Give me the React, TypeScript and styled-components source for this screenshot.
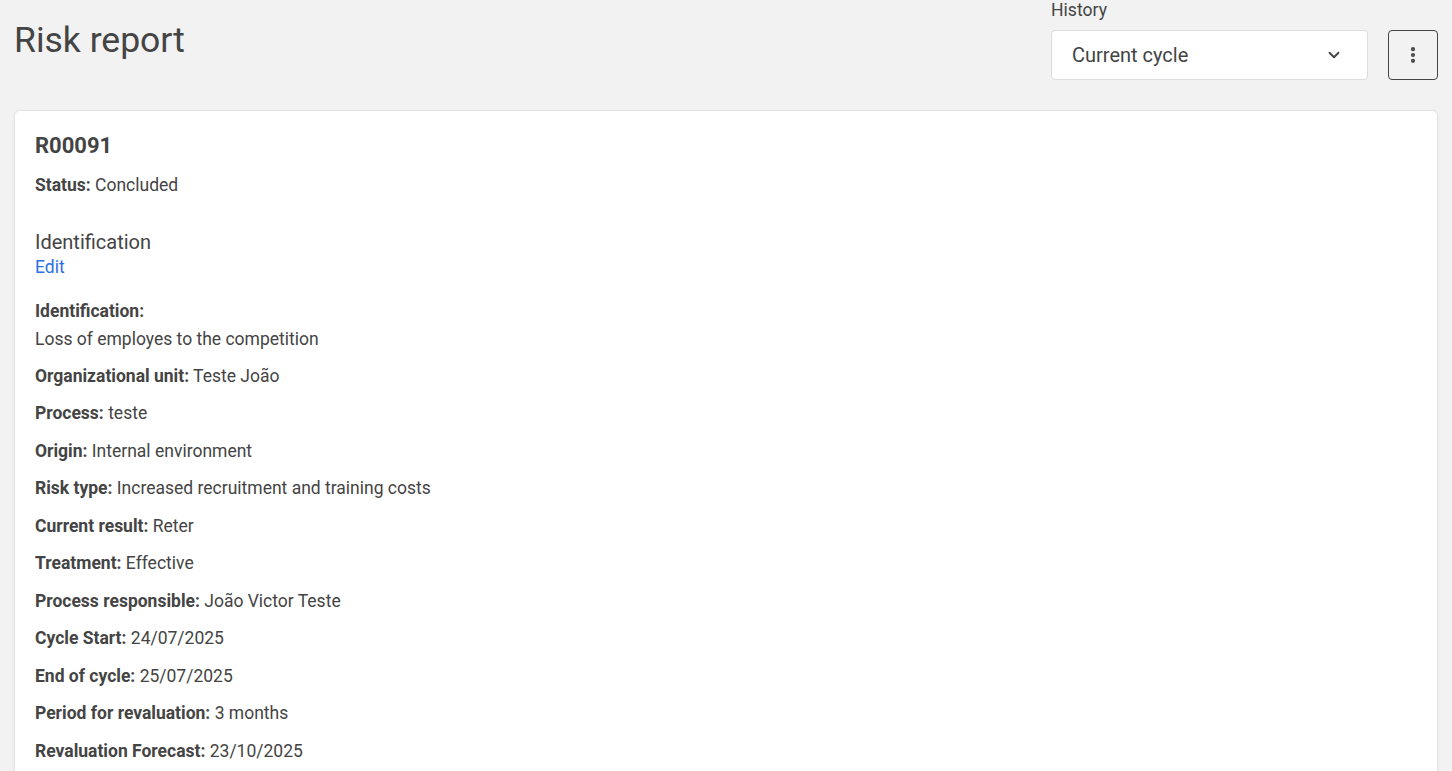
import React from 'react';
import styled, { createGlobalStyle } from 'styled-components';
import { ChevronDown, EllipsisVertical } from 'lucide-react';

const GlobalStyle = createGlobalStyle`
  body {
    margin: 0;
    background: #f2f2f2;
    font-family: Roboto, "Liberation Sans", Arial, sans-serif;
    color: #444;
  }
`;

const Page = styled.div`
  padding: 0 14px;
`;

const Header = styled.header`
  display: flex;
  justify-content: space-between;
  align-items: flex-start;
  height: 110px;
`;

const Title = styled.h1`
  margin: 20px 0 0 0;
  font-size: 35.5px;
  font-weight: 400;
  line-height: 40px;
  color: #444;
`;

const HeaderTools = styled.div`
  display: flex;
  align-items: flex-end;
  gap: 20px;
`;

const Field = styled.div`
  display: flex;
  flex-direction: column;
`;

const FieldLabel = styled.label`
  font-size: 17.6px;
  line-height: 20px;
  margin-bottom: 10px;
  color: #444;
`;

const Select = styled.div`
  width: 317px;
  height: 50px;
  box-sizing: border-box;
  padding: 0 24px 0 20px;
  display: flex;
  align-items: center;
  justify-content: space-between;
  background: #fff;
  border: 1px solid #dcdcdc;
  border-radius: 4px;
  font-size: 20px;
  color: #444;
`;

const IconButton = styled.button`
  width: 50px;
  height: 50px;
  display: flex;
  align-items: center;
  justify-content: center;
  background: transparent;
  border: 1px solid #444;
  border-radius: 4px;
  color: #444;
  padding: 0;
`;

const Card = styled.section`
  background: #fff;
  border: 1px solid #e4e4e4;
  border-radius: 6px;
  box-shadow: 0 1px 3px rgba(0, 0, 0, 0.06);
  padding: 23px 20px 10px;
  min-height: 700px;
`;

const Code = styled.h2`
  margin: 0;
  font-size: 22px;
  font-weight: 700;
  line-height: 24px;
`;

const Status = styled.p`
  margin: 15px 0 0;
  font-size: 17.5px;
  line-height: 24px;
`;

const SectionTitle = styled.h3`
  margin: 32px 0 0;
  font-size: 20px;
  font-weight: 400;
  line-height: 26px;
`;

const EditLink = styled.a`
  display: block;
  color: #2b6ee6;
  font-size: 17.5px;
  line-height: 24px;
  text-decoration: none;
  margin-bottom: 18px;
`;

const Row = styled.p`
  margin: 0 0 13.5px;
  font-size: 17.5px;
  line-height: 24px;
`;

const Stack = styled.div`
  margin: 0 0 10.5px;
  font-size: 17.5px;
  line-height: 28px;
`;

const Label = styled.strong`
  font-weight: 700;
`;

const rows: [string, string][] = [
  ['Organizational unit:', 'Teste João'],
  ['Process:', 'teste'],
  ['Origin:', 'Internal environment'],
  ['Risk type:', 'Increased recruitment and training costs'],
  ['Current result:', 'Reter'],
  ['Treatment:', 'Effective'],
  ['Process responsible:', 'João Victor Teste'],
  ['Cycle Start:', '24/07/2025'],
  ['End of cycle:', '25/07/2025'],
  ['Period for revaluation:', '3 months'],
  ['Revaluation Forecast:', '23/10/2025'],
];

export default function App() {
  return (
    <>
      <GlobalStyle />
      <Page>
        <Header>
          <Title>Risk report</Title>
          <HeaderTools>
            <Field>
              <FieldLabel>History</FieldLabel>
              <Select>
                <span>Current cycle</span>
                <ChevronDown size={18} strokeWidth={2.5} />
              </Select>
            </Field>
            <IconButton aria-label="More">
              <EllipsisVertical size={20} strokeWidth={3} />
            </IconButton>
          </HeaderTools>
        </Header>
        <Card>
          <Code>R00091</Code>
          <Status>
            <Label>Status:</Label> Concluded
          </Status>
          <SectionTitle>Identification</SectionTitle>
          <EditLink href="#">Edit</EditLink>
          <Stack>
            <Label>Identification:</Label>
            <div>Loss of employes to the competition</div>
          </Stack>
          {rows.map(([label, value]) => (
            <Row key={label}>
              <Label>{label}</Label> {value}
            </Row>
          ))}
        </Card>
      </Page>
    </>
  );
}
